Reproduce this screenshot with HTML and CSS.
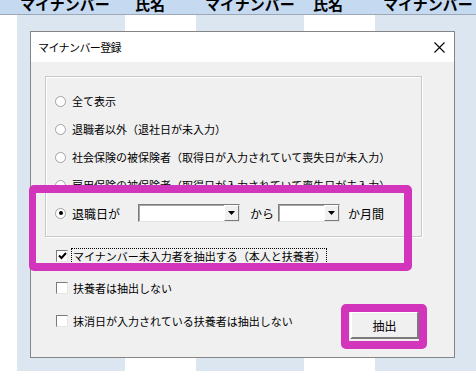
FILE: index.html
```html
<!DOCTYPE html>
<html lang="ja">
<head>
<meta charset="utf-8">
<link rel="stylesheet" href="styles.css">
</head>
<body>
<div class="sheet">
  <div class="head">
    <div class="hc c0"></div>
    <div class="hc c1"><span>マイナンバー</span></div>
    <div class="hc c2"><span>氏名</span></div>
    <div class="hc c3"><span>マイナンバー</span></div>
    <div class="hc c4"><span>氏名</span></div>
    <div class="hc c5"><span>マイナンバー</span></div>
  </div>
  <div class="cols">
    <div class="col w c0"></div>
    <div class="col b c1"></div>
    <div class="col w c2"></div>
    <div class="col b c3"></div>
    <div class="col w c4"></div>
    <div class="col b c5"></div>
  </div>
</div>

<div class="dialog">
  <div class="titlebar">
    <span class="title">マイナンバー登録</span>
    <svg class="close" width="11" height="11" viewBox="0 0 11 11"><path d="M0.5 0.5 L10.5 10.5 M10.5 0.5 L0.5 10.5" stroke="#000" stroke-width="1.1" fill="none"/></svg>
  </div>
  <div class="dbody">
    <div class="group">
      <div class="row"><span class="radio"></span><span>全て表示</span></div>
      <div class="row"><span class="radio"></span><span>退職者以外（退社日が未入力）</span></div>
      <div class="row"><span class="radio"></span><span>社会保険の被保険者（取得日が入力されていて喪失日が未入力）</span></div>
      <div class="row"><span class="radio"></span><span>雇用保険の被保険者（取得日が入力されていて喪失日が未入力）</span></div>
      <div class="row">
        <span class="radio on"></span><span class="lbl">退職日が</span>
        <span class="combo wide"><span class="cbtn"><svg width="7" height="4" viewBox="0 0 7 4"><path d="M0 0H7L3.5 4Z" fill="#000"/></svg></span></span>
        <span class="kara">から</span>
        <span class="combo narrow"><span class="cbtn"><svg width="7" height="4" viewBox="0 0 7 4"><path d="M0 0H7L3.5 4Z" fill="#000"/></svg></span></span>
        <span class="months">か月間</span>
      </div>
    </div>
    <div class="crow first"><span class="check"><svg width="9" height="8" viewBox="0 0 9 8"><path d="M1 3.5 L3.5 6 L8 1" stroke="#000" stroke-width="2" fill="none"/></svg></span><span class="focus">マイナンバー未入力者を抽出する（本人と扶養者）</span></div>
    <div class="crow"><span class="check"></span><span class="ctext">扶養者は抽出しない</span></div>
    <div class="crow last"><span class="check"></span><span class="ctext">抹消日が入力されている扶養者は抽出しない</span><button class="btn">抽出</button></div>
  </div>
</div>

<div class="mark mark1"></div>
<div class="mark mark2"></div>
</body>
</html>
```

FILE: styles.css
```css
html, body {
  margin: 0;
  padding: 0;
}
body {
  width: 476px;
  height: 371px;
  overflow: hidden;
  position: relative;
  font-family: "Noto Sans CJK JP", "Noto Sans", sans-serif;
  background: #fff;
}
.sheet {
  display: flex;
  flex-direction: column;
  height: 371px;
}
.head {
  display: flex;
  height: 14px;
  background: #c5d9f1;
  border-bottom: 1px solid #9ea8b4;
  overflow: hidden;
}
.hc {
  font-size: 15px;
  font-weight: bold;
  line-height: 15px;
  color: #000;
  white-space: nowrap;
  overflow: hidden;
}
.hc span {
  display: block;
  margin-top: -4px;
}
.c0 { width: 17px; }
.c1 { width: 108px; }
.c2 { width: 71px; }
.c3 { width: 108px; }
.c4 { width: 71px; }
.c5 { width: 101px; }
.head .c1 span { padding-left: 3px; }
.head .c2 span { padding-left: 10px; }
.head .c3 span { padding-left: 9px; }
.head .c4 span { padding-left: 9px; }
.head .c5 span { padding-left: 8px; }
.cols {
  display: flex;
  flex: 1;
}
.col.w { background: #fff; }
.col.b { background: #dce6f1; }

.dialog {
  position: absolute;
  left: 30px;
  top: 31px;
  width: 425px;
  height: 327px;
  box-sizing: border-box;
  border: 1px solid #858585;
  background: #f0f0f0;
  display: flex;
  flex-direction: column;
  font-size: 11px;
  color: #000;
}
.titlebar {
  height: 30px;
  background: #fff;
  display: flex;
  align-items: center;
  justify-content: space-between;
  padding: 0 9px 0 7px;
  flex: none;
}
.title {
  font-size: 11px;
  letter-spacing: -0.6px;
}
.close { display: block; }
.dbody {
  padding: 14px 0 0 14px;
  flex: 1;
}
.group {
  width: 377px;
  height: 161px;
  box-sizing: border-box;
  border: 1px solid #c8c8c8;
  box-shadow: inset 1px 1px 0 #fff, 1px 1px 0 #fff;
  padding: 10px 0 0 9px;
}
.row {
  height: 28px;
  display: flex;
  align-items: center;
  white-space: nowrap;
}
.radio {
  width: 11px;
  height: 11px;
  box-sizing: border-box;
  border-radius: 50%;
  border: 1px solid #a2a2a2;
  background: #fff;
  margin-right: 6px;
  flex: none;
  display: flex;
  align-items: center;
  justify-content: center;
}
.radio.on::after {
  content: "";
  width: 4px;
  height: 4px;
  border-radius: 50%;
  background: #000;
}
.lbl {
  width: 66px;
  font-size: 12px;
}
.combo {
  height: 18px;
  box-sizing: border-box;
  background: #fff;
  border-top: 1px solid #7c7c7c;
  border-left: 1px solid #7c7c7c;
  border-right: 1px solid #e3e3e3;
  border-bottom: 1px solid #e3e3e3;
  box-shadow: inset 1px 1px 0 #a6a6a6;
  display: flex;
  justify-content: flex-end;
}
.combo.wide { width: 102px; }
.combo.narrow { width: 62px; }
.cbtn {
  width: 15px;
  height: 16px;
  box-sizing: border-box;
  background: #f0f0f0;
  border-top: 1px solid #fff;
  border-left: 1px solid #fff;
  border-right: 1px solid #7a7a7a;
  border-bottom: 1px solid #7a7a7a;
  display: flex;
  align-items: center;
  justify-content: center;
}
.cbtn svg { display: block; }
.kara {
  margin-left: 10px;
  width: 28px;
  font-size: 12px;
}
.months {
  margin-left: 8px;
  font-size: 12px;
}
.crow {
  height: 32px;
  display: flex;
  align-items: center;
  padding-left: 11px;
  white-space: nowrap;
}
.crow.first { margin-top: 3px; }
.check {
  width: 12px;
  height: 12px;
  box-sizing: border-box;
  background: #fff;
  border-top: 1px solid #7a7a7a;
  border-left: 1px solid #7a7a7a;
  border-right: 1px solid #e6e6e6;
  border-bottom: 1px solid #e6e6e6;
  margin-right: 3px;
  flex: none;
  display: flex;
  align-items: center;
  justify-content: center;
}
.ctext { margin-left: 2px; }
.focus {
  border: 1px dotted #000;
  padding: 0 0 0 1px;
  line-height: 14px;
}
.crow.last { margin-top: 1px; }
.btn {
  margin-left: auto;
  margin-right: 35px;
  align-self: flex-start;
  margin-top: 6px;
  width: 69px;
  height: 28px;
  box-sizing: border-box;
  background: #f0f0f0;
  border-top: 2px solid #fff;
  border-left: 2px solid #fff;
  border-right: 2px solid #7a7a7a;
  border-bottom: 2px solid #7a7a7a;
  font-family: "Noto Sans CJK JP", sans-serif;
  font-size: 12px;
  color: #000;
  padding: 0;
}

.mark {
  position: absolute;
  box-sizing: border-box;
  border-style: solid;
  border-color: #d334bc;
  border-radius: 5px;
}
.mark1 {
  left: 29px;
  top: 185px;
  width: 383px;
  height: 86px;
  border-width: 8px 8px 8px 7px;
}
.mark2 {
  left: 341px;
  top: 304px;
  width: 86px;
  height: 45px;
  border-width: 8px;
}
```
